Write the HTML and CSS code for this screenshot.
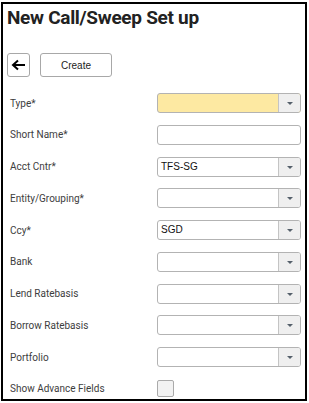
FILE: index.html
```html
<!DOCTYPE html>
<html>
<head>
  <title>New Call/Sweep Set up</title>
  <link rel="stylesheet" href="styles.css">
</head>
<body>
  <div class="panel">
    <h1>New Call/Sweep Set up</h1>

    <div class="toolbar">
      <button class="tool-button back-button">
        <svg width="15" height="12" viewBox="0 0 15 12">
          <path d="M14 6H2.5M7 1.5L2 6l5 4.5" fill="none" stroke="#000" stroke-width="2"/>
        </svg>
      </button>
      <button class="tool-button create-button">Create</button>
    </div>

    <div class="form">
      <label class="field-label">Type*</label>
      <div class="combo combo-required">
        <span class="combo-value"></span>
        <span class="combo-arrow"></span>
      </div>

      <label class="field-label">Short Name*</label>
      <div class="text-input"></div>

      <label class="field-label">Acct Cntr*</label>
      <div class="combo">
        <span class="combo-value">TFS-SG</span>
        <span class="combo-arrow"></span>
      </div>

      <label class="field-label">Entity/Grouping*</label>
      <div class="combo">
        <span class="combo-value"></span>
        <span class="combo-arrow"></span>
      </div>

      <label class="field-label">Ccy*</label>
      <div class="combo">
        <span class="combo-value">SGD</span>
        <span class="combo-arrow"></span>
      </div>

      <label class="field-label">Bank</label>
      <div class="combo">
        <span class="combo-value"></span>
        <span class="combo-arrow"></span>
      </div>

      <label class="field-label">Lend Ratebasis</label>
      <div class="combo">
        <span class="combo-value"></span>
        <span class="combo-arrow"></span>
      </div>

      <label class="field-label">Borrow Ratebasis</label>
      <div class="combo">
        <span class="combo-value"></span>
        <span class="combo-arrow"></span>
      </div>

      <label class="field-label">Portfolio</label>
      <div class="combo">
        <span class="combo-value"></span>
        <span class="combo-arrow"></span>
      </div>

      <label class="field-label">Show Advance Fields</label>
      <div class="check-cell">
        <span class="checkbox"></span>
      </div>
    </div>
  </div>
</body>
</html>
```

FILE: styles.css
```css
body {
  margin: 0;
  background-color: #fff;
  font-family: Roboto, 'Liberation Sans', sans-serif;
  color: #333;
}

.panel {
  margin: 2px 0 0 1px;
  width: 306px;
  height: 399px;
  box-sizing: border-box;
  border: 2px solid #000;
  padding: 0 4px 0 4px;
}

h1 {
  margin: 0;
  font-size: 19px;
  font-weight: 700;
  line-height: 28px;
  color: #222;
  letter-spacing: -0.3px;
}

/* Toolbar */
.toolbar {
  display: flex;
  gap: 10px;
  margin-top: 21px;
}

.tool-button {
  height: 24px;
  padding: 0;
  background-color: #fff;
  border: 1px solid #a8a8a8;
  border-radius: 3px;
  font-family: 'Liberation Sans', Arial, sans-serif;
  color: #222;
  cursor: pointer;
}

.back-button {
  width: 23px;
  display: flex;
  align-items: center;
  justify-content: center;
}

.create-button {
  width: 72px;
  font-size: 10px;
}

/* Form rows */
.form {
  display: grid;
  grid-template-columns: 147px 1fr;
  row-gap: 11.75px;
  margin-top: 16px;
  padding-left: 3px;
  align-items: center;
}

.field-label {
  font-size: 10px;
  color: #3d3d3d;
}

.text-input,
.combo {
  height: 20px;
  box-sizing: border-box;
  border: 1px solid #b3b3b3;
  border-radius: 3px;
  background-color: #fff;
}

.combo {
  display: flex;
  overflow: hidden;
}

.combo-required {
  background-color: #fde9a2;
}

.combo-value {
  flex: 1;
  padding-left: 3px;
  font-family: 'Liberation Sans', Arial, sans-serif;
  font-size: 10px;
  line-height: 18px;
  color: #111;
}

.combo-arrow {
  position: relative;
  width: 21px;
  border-left: 1px solid #c4c4c4;
  background-color: #efefef;
}

.combo-arrow:after {
  content: "";
  position: absolute;
  top: 8px;
  left: 8px;
  border-left: 3px solid transparent;
  border-right: 3px solid transparent;
  border-top: 3px solid #55606b;
}

.check-cell {
  height: 20px;
  display: flex;
  align-items: center;
}

.checkbox {
  width: 17px;
  height: 17px;
  box-sizing: border-box;
  border: 1px solid #aaa;
  border-radius: 2px;
  background-color: #f2f2f2;
}
```
